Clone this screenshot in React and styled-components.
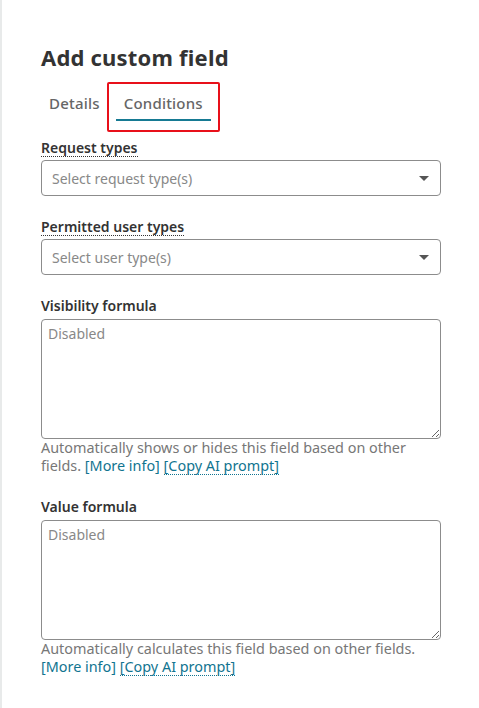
import styled, { createGlobalStyle } from "styled-components";

const GlobalStyle = createGlobalStyle`
  body {
    margin: 0;
    background: #fff;
    font-family: "Noto Sans", "Liberation Sans", sans-serif;
    color: #333;
  }
`;

const Panel = styled.div`
  box-sizing: border-box;
  width: 479px;
  min-height: 708px;
  border-left: 2px solid #e8eaea;
  padding: 41px 38px 30px 39px;
`;

const Title = styled.h1`
  margin: 0;
  font-size: 22px;
  font-weight: 700;
  line-height: 32px;
  letter-spacing: 0.2px;
  color: #333;
`;

const Tabs = styled.div`
  display: flex;
  gap: 8px;
  margin-top: 20px;
`;

const Tab = styled.div`
  position: relative;
  padding: 0 8px 6px;
  font-size: 15px;
  font-weight: 500;
  line-height: 20px;
  letter-spacing: 0.2px;
  color: #666;
  border-bottom: 2px solid ${(p) => (p.$active ? "#167a93" : "transparent")};

  /* red annotation frame drawn over the selected tab */
  ${(p) =>
    p.$marked &&
    `
    &::after {
      content: "";
      position: absolute;
      top: -11px;
      bottom: -13px;
      left: -9px;
      right: -9px;
      border: 2px solid #e8101a;
      border-radius: 2px;
    }
  `}
`;

const Field = styled.div`
  display: flex;
  flex-direction: column;
  align-items: flex-start;
  margin-top: ${(p) => p.$gap ?? 22}px;
`;

const Label = styled.label`
  font-size: 14px;
  font-weight: 600;
  line-height: 17px;
  color: #333;
  margin-bottom: ${(p) => (p.$dotted ? 3 : 5)}px;
  border-bottom: ${(p) => (p.$dotted ? "1px dotted #333" : "none")};
`;

const SelectBox = styled.div`
  box-sizing: border-box;
  width: 400px;
  height: 36px;
  border: 1px solid #8c8c8c;
  border-radius: 4px;
  display: flex;
  align-items: center;
  justify-content: space-between;
  padding: 0 8px 0 10px;
  font-size: 14px;
  color: #888;
`;

const Caret = styled.span`
  width: 0;
  height: 0;
  border-left: 5px solid transparent;
  border-right: 5px solid transparent;
  border-top: 5px solid #555;
  margin-right: 3px;
`;

const TextArea = styled.textarea`
  display: block;
  box-sizing: border-box;
  width: 400px;
  height: 120px;
  margin: 0;
  border: 1px solid #8c8c8c;
  border-radius: 4px;
  padding: 4px 6px;
  font-family: inherit;
  font-size: 14px;
  color: #333;
  background: #fff;
  resize: vertical;
  &::placeholder {
    color: #888;
  }
`;

const Help = styled.p`
  margin: 0;
  font-size: 14.4px;
  line-height: 18px;
  color: #777;
`;

const Tail = styled.span`
  white-space: nowrap;
`;

const Link = styled.a`
  display: inline-block;
  line-height: 16px;
  color: #117490;
  text-decoration: none;
  border-bottom: ${(p) => (p.$dotted ? "1px dotted #117490" : "none")};
`;

export default function App() {
  return (
    <>
      <GlobalStyle />
      <Panel>
        <Title>Add custom field</Title>
        <Tabs>
          <Tab>Details</Tab>
          <Tab $active $marked>
            Conditions
          </Tab>
        </Tabs>
        <Field $gap={18}>
          <Label $dotted>Request types</Label>
          <SelectBox>
            Select request type(s)
            <Caret />
          </SelectBox>
        </Field>
        <Field>
          <Label $dotted>Permitted user types</Label>
          <SelectBox>
            Select user type(s)
            <Caret />
          </SelectBox>
        </Field>
        <Field>
          <Label>Visibility formula</Label>
          <TextArea placeholder="Disabled" />
          <Help>
            Automatically shows or hides this field based on other{" "}
            <Tail>
              fields. <Link>[More info]</Link>{" "}
              <Link $dotted>[Copy AI prompt]</Link>
            </Tail>
          </Help>
        </Field>
        <Field $gap={23}>
          <Label>Value formula</Label>
          <TextArea placeholder="Disabled" />
          <Help>
            Automatically calculates this field based on other fields.{" "}
            <Tail>
              <Link>[More info]</Link> <Link $dotted>[Copy AI prompt]</Link>
            </Tail>
          </Help>
        </Field>
      </Panel>
    </>
  );
}
